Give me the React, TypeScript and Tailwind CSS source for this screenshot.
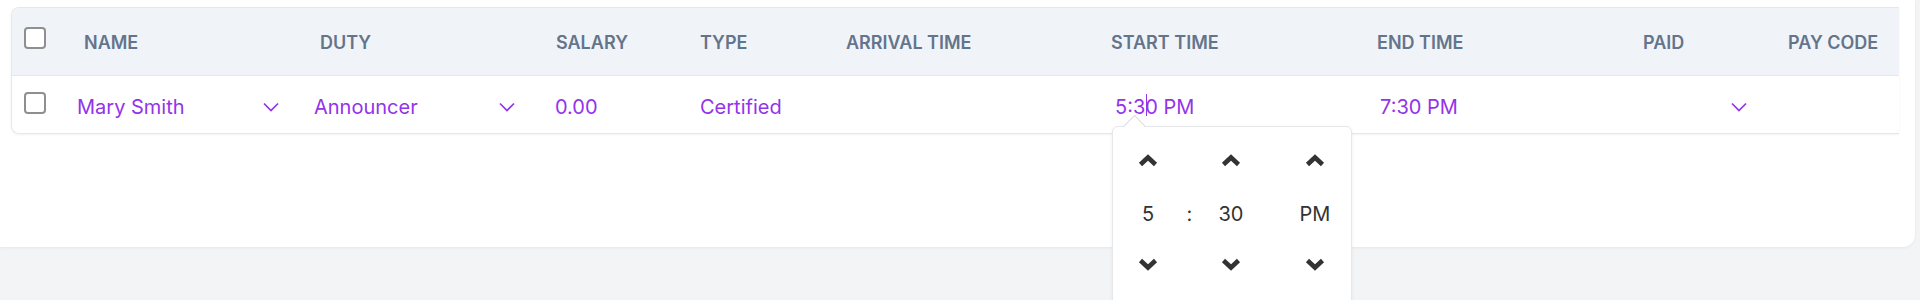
import React from 'react';

const font = { fontFamily: 'Inter, "Noto Sans", sans-serif' };

function Checkbox() {
  return <div className="mb-[7px] h-[22px] w-[22px] rounded-[4px] border-2 border-[#8f8f8f] bg-white" />;
}

function SmallChevron() {
  return (
    <svg width="16" height="10" viewBox="0 0 16 10" fill="none">
      <polyline points="1,1.5 8,8.5 15,1.5" stroke="#9333ea" strokeWidth="1.7" />
    </svg>
  );
}

function BoldChevron({ up }: { up?: boolean }) {
  return (
    <svg width="20" height="13" viewBox="0 0 20 13" fill="none">
      <polyline
        points={up ? '2.5,10.5 10,3.5 17.5,10.5' : '2.5,2.5 10,9.5 17.5,2.5'}
        stroke="#333"
        strokeWidth="4.6"
        strokeLinejoin="miter"
      />
    </svg>
  );
}

const columns = [
  { label: 'NAME', w: 'w-[236px]' },
  { label: 'DUTY', w: 'w-[236px]' },
  { label: 'SALARY', w: 'w-[144px]' },
  { label: 'TYPE', w: 'w-[146px]' },
  { label: 'ARRIVAL TIME', w: 'w-[265px]' },
  { label: 'START TIME', w: 'w-[266px]' },
  { label: 'END TIME', w: 'w-[266px]' },
  { label: 'PAID', w: 'w-[145px]' },
  { label: 'PAY CODE', w: 'w-[160px]' },
];

function SpinColumn({ value, width }: { value: string; width: string }) {
  return (
    <div className={`flex flex-col items-center ${width}`}>
      <div className="flex h-[40px] items-center">
        <BoldChevron up />
      </div>
      <div className="flex h-[67px] items-center text-[20px] text-[#333]">{value}</div>
      <div className="flex h-[34px] items-center">
        <BoldChevron />
      </div>
    </div>
  );
}

function TimePopover() {
  return (
    <div className="absolute left-[18px] top-[34px] z-10 h-[200px] w-[240px] rounded-md border border-[#e5e7eb] bg-white shadow-[0_1px_4px_rgba(0,0,0,0.06)]">
      <div className="absolute left-[14px] top-[-9px] h-[15px] w-[15px] rotate-45 border-l border-t border-[#d9d9d9] bg-white" />
      <div className="relative flex pl-[10px] pt-[14px]">
        <SpinColumn value="5" width="w-[50px]" />
        <div className="flex w-[33px] flex-col items-center">
          <div className="h-[40px]" />
          <div className="flex h-[67px] items-center text-[20px] text-[#333]">:</div>
        </div>
        <SpinColumn value="30" width="w-[50px]" />
        <div className="w-[34px]" />
        <SpinColumn value="PM" width="w-[50px]" />
      </div>
    </div>
  );
}

export default function App() {
  return (
    <div className="h-[300px] w-full overflow-hidden bg-[#f3f4f6]" style={font}>
      <div className="h-[247px] w-[1915px] rounded-br-[12px] bg-white pl-[11px] pt-[7px] shadow-[0_1px_3px_rgba(0,0,0,0.06)]">
        <div className="relative w-[1888px] rounded-l-lg border-y border-l border-[#e5e7eb] shadow-[0_1px_3px_rgba(0,0,0,0.05)]">
          <div className="flex h-[68px] items-center overflow-hidden rounded-tl-lg border-b border-[#e5e7eb] bg-[#f0f4f9]">
            <div className="flex w-[55px] shrink-0 items-center pl-[12px]">
              <Checkbox />
            </div>
            {columns.map((c) => (
              <div
                key={c.label}
                className={`${c.w} shrink-0 whitespace-nowrap pl-[17px] pt-[2px] text-[18px] font-semibold text-[#64748b]`}
              >
                {c.label}
              </div>
            ))}
          </div>
          <div className="flex h-[57px] items-center rounded-bl-lg bg-white pt-[4px] text-[20px] leading-[30px] text-[#9333ea]">
            <div className="flex w-[55px] shrink-0 items-center pl-[12px]">
              <Checkbox />
            </div>
            <div className="flex w-[236px] shrink-0 items-center justify-between pl-[10px] pr-[24px]">
              <span>Mary Smith</span>
              <SmallChevron />
            </div>
            <div className="flex w-[236px] shrink-0 items-center justify-between pl-[11px] pr-[24px]">
              <span>Announcer</span>
              <SmallChevron />
            </div>
            <div className="w-[144px] shrink-0 pl-[16px]">0.00</div>
            <div className="w-[146px] shrink-0 pl-[17px]">Certified</div>
            <div className="w-[265px] shrink-0" />
            <div className="relative w-[266px] shrink-0 pl-[21px]">
              <span className="relative">
                5:3
                <span className="absolute right-[-2px] top-[-1px] h-[22px] w-[1.5px] bg-[#9333ea]" />
              </span>
              0 PM
              <TimePopover />
            </div>
            <div className="w-[266px] shrink-0 pl-[20px]">7:30 PM</div>
            <div className="flex w-[145px] shrink-0 justify-end pr-[24px]">
              <SmallChevron />
            </div>
            <div className="w-[160px] shrink-0" />
          </div>
        </div>
      </div>
    </div>
  );
}
